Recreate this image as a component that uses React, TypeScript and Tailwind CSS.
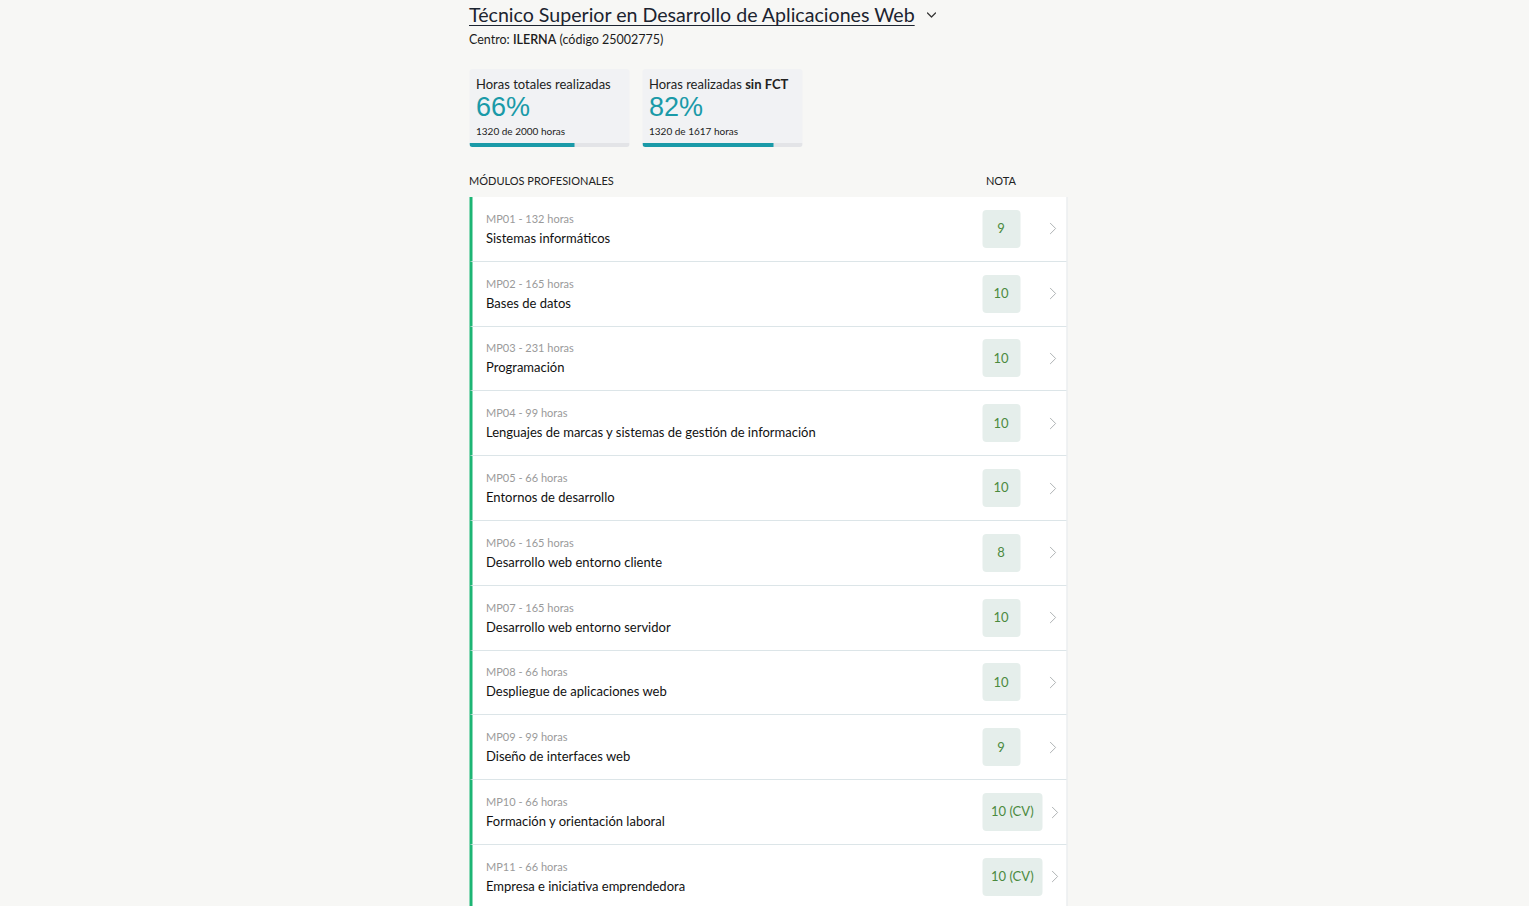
import { ChevronDown, ChevronRight } from "lucide-react";

const modules = [
  { code: "MP01", hours: 132, name: "Sistemas informáticos", grade: "9" },
  { code: "MP02", hours: 165, name: "Bases de datos", grade: "10" },
  { code: "MP03", hours: 231, name: "Programación", grade: "10" },
  { code: "MP04", hours: 99, name: "Lenguajes de marcas y sistemas de gestión de información", grade: "10" },
  { code: "MP05", hours: 66, name: "Entornos de desarrollo", grade: "10" },
  { code: "MP06", hours: 165, name: "Desarrollo web entorno cliente", grade: "8" },
  { code: "MP07", hours: 165, name: "Desarrollo web entorno servidor", grade: "10" },
  { code: "MP08", hours: 66, name: "Despliegue de aplicaciones web", grade: "10" },
  { code: "MP09", hours: 99, name: "Diseño de interfaces web", grade: "9" },
  { code: "MP10", hours: 66, name: "Formación y orientación laboral", grade: "10 (CV)" },
  { code: "MP11", hours: 66, name: "Empresa e iniciativa emprendedora", grade: "10 (CV)" },
];

function StatCard({ title, pct, detail }: { title: React.ReactNode; pct: number; detail: string }) {
  return (
    <div className="flex h-[78px] w-[160px] flex-col overflow-hidden rounded-[3px] bg-[#f1f2f4]">
      <div className="flex-1 px-[7px] pt-[7px]">
        <p className="text-[13px] leading-4 text-[#222]">{title}</p>
        <p className="mt-[1px] font-['Liberation_Sans',Arial,sans-serif] text-[27px] leading-[28px] text-[#1a9aa8]">{pct}%</p>
        <p className="mt-[4px] text-[10px] leading-3 text-[#222]">{detail}</p>
      </div>
      <div className="h-[4px] w-full bg-[#e3e4e7]">
        <div className="h-full bg-[#1a9aa8]" style={{ width: `${pct}%` }} />
      </div>
    </div>
  );
}

export default function App() {
  return (
    <div className="min-h-screen bg-[#f7f7f5] font-['Lato','Noto_Sans',sans-serif] text-[#1c1c1c]">
      <div className="mx-auto w-[598px] translate-x-[3.5px]">
        <div className="flex items-center gap-[9px] pt-[3px]">
          <h1 className="text-[19.6px] leading-[24px] text-[#1c2430] underline decoration-1 underline-offset-[3px]">
            Técnico Superior en Desarrollo de Aplicaciones Web
          </h1>
          <ChevronDown className="h-4 w-4 text-[#333]" strokeWidth={1.8} />
        </div>
        <p className="mt-[5px] text-[12.5px] leading-4">
          Centro: <span className="font-semibold">ILERNA</span> (código 25002775)
        </p>

        <div className="mt-[21px] flex gap-[13px]">
          <StatCard title="Horas totales realizadas" pct={66} detail="1320 de 2000 horas" />
          <StatCard
            title={<>Horas realizadas <span className="font-bold">sin FCT</span></>}
            pct={82}
            detail="1320 de 1617 horas"
          />
        </div>

        <div className="mt-[28px] flex items-center text-[11px] leading-3 text-[#222]">
          <span className="flex-1">MÓDULOS PROFESIONALES</span>
          <span className="mr-[51px]">NOTA</span>
        </div>

        <div className="mt-[10px] border-r border-[#e2e6e8] bg-white">
          {modules.map((m) => (
            <div key={m.code} className="flex h-[64.8px] items-center border-b border-[#dce5e8] border-l-[3px] border-l-[#1db574] pl-[14px]">
              <div className="flex-1">
                <p className="text-[11px] leading-[14px] text-[#9a9a9a]">
                  {m.code} - {m.hours} horas
                </p>
                <p className="mt-[4px] text-[13px] leading-4 text-[#111]">{m.name}</p>
              </div>
              <div className="flex w-[84px] items-center">
                <div className="flex h-[38px] min-w-[38px] items-center justify-center rounded-[4px] bg-[#e5eeeb] px-[9px] text-[13px] text-[#4b8a3e]">
                  {m.grade}
                </div>
                <ChevronRight className={`h-[21px] w-[21px] text-[#a8acae] ${m.grade.length > 2 ? "ml-[2px]" : "ml-[22px]"}`} strokeWidth={1.05} />
              </div>
            </div>
          ))}
        </div>
      </div>
    </div>
  );
}
